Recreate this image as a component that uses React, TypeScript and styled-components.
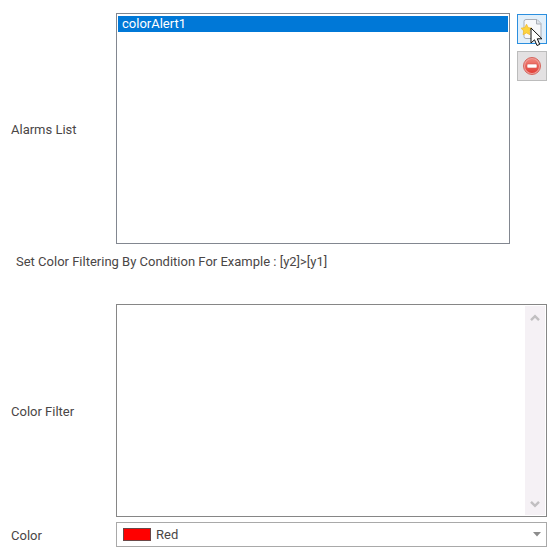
import React, { useRef, useState } from "react";
import styled, { createGlobalStyle } from "styled-components";

const GlobalStyle = createGlobalStyle`
  *, *::before, *::after { box-sizing: border-box; }
  body {
    margin: 0;
    background: #fff;
    color: #4a4646;
    font: 13px/20px "Roboto", "Liberation Sans", sans-serif;
  }
  button, select, textarea { font: inherit; color: inherit; margin: 0; }
`;

const Form = styled.form`
  display: flex;
  flex-direction: column;
  padding: 13px 2px 0 11px;
`;

const Field = styled.div`
  display: grid;
  grid-template-columns: 105px minmax(0, 1fr);
  align-items: center;
`;

const Label = styled.label`
  padding-top: 2px;
`;

const ListArea = styled.div`
  display: flex;
  align-items: flex-start;
  gap: 7px;
`;

const AlarmSelect = styled.select`
  flex: 1;
  min-width: 0;
  height: 231px;
  padding: 2px 1px;
  border: 1px solid #828790;
  border-radius: 0;
  outline: none;
  background: #fff;
  overflow: hidden;

  option {
    min-height: 0;
    height: 16px;
    padding: 0 4px;
    line-height: 16px;
  }
  option:checked {
    background: linear-gradient(#0078d7, #0078d7);
    -webkit-text-fill-color: #fff;
  }
`;

const Actions = styled.div`
  display: flex;
  flex-direction: column;
  gap: 7px;
  padding-top: 1px;
`;

const IconButton = styled.button<{ $active?: boolean }>`
  display: grid;
  place-items: center;
  width: 30px;
  height: 30px;
  padding: 0;
  border: 1px solid ${(p) => (p.$active ? "#2b8fdf" : "#bcbcbc")};
  background: ${(p) => (p.$active ? "#e1effa" : "#e3e1e2")};
  position: relative;
`;

const Pointer = styled.svg`
  position: absolute;
  left: 12px;
  top: 12px;
  pointer-events: none;
`;

const Hint = styled.p`
  margin: 0;
  padding: 8px 5px 32px;
`;

const FilterBox = styled.div`
  display: flex;
  height: 213px;
  padding: 1px;
  border: 1px solid #868686;
`;

const FilterInput = styled.textarea`
  flex: 1;
  min-width: 0;
  padding: 4px;
  border: 0;
  outline: none;
  resize: none;
  background: #fff;
  scrollbar-width: none;
`;

const ScrollTrack = styled.div`
  display: flex;
  flex-direction: column;
  justify-content: space-between;
  width: 20px;
  background: #f5f1f5;
`;

const ScrollButton = styled.button`
  display: grid;
  place-items: center;
  height: 23px;
  padding: 0;
  border: 0;
  background: transparent;
`;

const ColorField = styled(Field)`
  padding-top: 5px;
`;

const ColorBox = styled.div`
  display: grid;
  grid-template-columns: minmax(0, 1fr);
  align-items: center;
  height: 25px;
  border: 1px solid #a9a9a9;

  > * {
    grid-area: 1 / 1;
  }
`;

const Swatch = styled.span<{ $color: string }>`
  width: 28px;
  height: 13px;
  margin-left: 6px;
  border: 1px solid #6b4747;
  background: ${(p) => p.$color};
  pointer-events: none;
  z-index: 1;
`;

const ColorSelect = styled.select`
  appearance: none;
  width: 100%;
  height: 23px;
  padding: 0 24px 0 39px;
  border: 0;
  border-radius: 0;
  outline: none;
  background: #fff;
`;

const DropArrow = styled.svg`
  justify-self: end;
  margin-right: 5px;
  pointer-events: none;
  z-index: 1;
`;

function NewPageIcon() {
  return (
    <svg width="22" height="22" viewBox="0 0 22 22" aria-hidden="true">
      <path d="M5 1.5h11l4 4v13q0 2-2 2H5q-2 0-2-2v-15q0-2 2-2z" fill="#f7f8fa" stroke="#a9aeb6" />
      <path d="M15.5 2v4H20" fill="#dfe3e8" stroke="#a9aeb6" />
      <path
        d="M5.5 6.2l1.7 3.4 3.8.6-2.7 2.7.6 3.8-3.4-1.8-3.4 1.8.6-3.8L0 10.2l3.8-.6z"
        fill="#fbd33f"
        stroke="#efb82b"
        strokeWidth=".7"
      />
    </svg>
  );
}

function RemoveIcon() {
  return (
    <svg width="20" height="20" viewBox="0 0 20 20" aria-hidden="true">
      <defs>
        <linearGradient id="removeFill" x1="0" y1="0" x2="0" y2="1">
          <stop offset="0" stopColor="#f0857b" />
          <stop offset="1" stopColor="#e13d35" />
        </linearGradient>
      </defs>
      <circle cx="10" cy="10" r="8.5" fill="#f0a09a" stroke="#d5655d" />
      <circle cx="10" cy="10" r="7" fill="url(#removeFill)" />
      <rect x="5" y="8" width="10" height="4" rx="1" fill="#fff" stroke="#d8554d" strokeWidth=".6" />
    </svg>
  );
}

function Chevron({ up }: { up?: boolean }) {
  return (
    <svg width="10" height="8" viewBox="0 0 10 8" aria-hidden="true">
      <path d={up ? "M1 6.2l4-4 4 4" : "M1 1.8l4 4 4-4"} fill="none" stroke="#c1bfc1" strokeWidth="2.4" />
    </svg>
  );
}

export default function App() {
  const [alarms, setAlarms] = useState(["colorAlert1"]);
  const [selected, setSelected] = useState("colorAlert1");
  const [color, setColor] = useState("Red");
  const filter = useRef<HTMLTextAreaElement>(null);

  const addAlarm = () => {
    const name = `colorAlert${alarms.length + 1}`;
    setAlarms([...alarms, name]);
    setSelected(name);
  };
  const removeAlarm = () => {
    const rest = alarms.filter((a) => a !== selected);
    setAlarms(rest);
    setSelected(rest[0] ?? "");
  };
  const scroll = (top: number) => filter.current?.scrollBy({ top });

  return (
    <>
      <GlobalStyle />
      <Form onSubmit={(e) => e.preventDefault()}>
        <Field>
          <Label htmlFor="alarms">Alarms List</Label>
          <ListArea>
            <AlarmSelect id="alarms" size={12} value={selected} onChange={(e) => setSelected(e.target.value)}>
              {alarms.map((a) => (
                <option key={a} value={a}>{a}</option>
              ))}
            </AlarmSelect>
            <Actions>
              <IconButton type="button" $active aria-label="Add alarm" onClick={addAlarm}>
                <NewPageIcon />
                <Pointer width="13" height="20" viewBox="0 0 13 20" aria-hidden="true">
                  <path d="M1 1v15l3.5-3.2L7 18.5l2.7-1.1-2.4-5.6H12z" fill="#fff" stroke="#111" />
                </Pointer>
              </IconButton>
              <IconButton type="button" aria-label="Remove alarm" onClick={removeAlarm}>
                <RemoveIcon />
              </IconButton>
            </Actions>
          </ListArea>
        </Field>
        <Hint>Set Color Filtering By Condition For Example : [y2]&gt;[y1]</Hint>
        <Field>
          <Label htmlFor="filter">Color Filter</Label>
          <FilterBox>
            <FilterInput id="filter" ref={filter} />
            <ScrollTrack>
              <ScrollButton type="button" aria-label="Scroll up" onClick={() => scroll(-20)}>
                <Chevron up />
              </ScrollButton>
              <ScrollButton type="button" aria-label="Scroll down" onClick={() => scroll(20)}>
                <Chevron />
              </ScrollButton>
            </ScrollTrack>
          </FilterBox>
        </Field>
        <ColorField>
          <Label htmlFor="color">Color</Label>
          <ColorBox>
            <ColorSelect id="color" value={color} onChange={(e) => setColor(e.target.value)}>
              <option>Red</option>
              <option>Green</option>
              <option>Blue</option>
            </ColorSelect>
            <Swatch $color={color === "Red" ? "#ff0000" : color.toLowerCase()} />
            <DropArrow width="8" height="5" viewBox="0 0 8 5" aria-hidden="true">
              <path d="M0 0h8L4 4.5z" fill="#8c8c8c" />
            </DropArrow>
          </ColorBox>
        </ColorField>
      </Form>
    </>
  );
}
